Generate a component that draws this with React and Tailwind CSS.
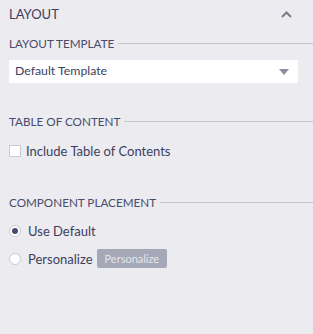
import React, { useState } from 'react';

const SectionTitle = ({ children }) => (
  <div className="flex items-center gap-[4px]">
    <span className="text-[11.7px] leading-[14px] text-[#4a4c6a] whitespace-nowrap">{children}</span>
    <div className="flex-1 h-px bg-[#c4c5cf]" />
  </div>
);

const Radio = ({ checked }) => (
  <span className="w-[12px] h-[12px] rounded-full bg-white border border-[#c9cad3] flex items-center justify-center">
    {checked && <span className="w-[6px] h-[6px] rounded-full bg-[#4a4c6a]" />}
  </span>
);

const App = () => {
  const [placement, setPlacement] = useState('default');
  const [toc, setToc] = useState(false);

  return (
    <div
      className="w-[313px] h-[334px] bg-[#ebebf0] text-[#3d3f5c] pl-[9px]"
      style={{ fontFamily: 'Lato, "Open Sans", sans-serif' }}
    >
      {/* Header */}
      <div className="flex items-center justify-between pr-[21px] pt-[7px] h-[22px]">
        <span className="text-[13px] leading-[15px] text-[#3d3f5c]">LAYOUT</span>
        <svg width="11" height="7" viewBox="0 0 11 7" fill="none">
          <path d="M1 6L5.5 1.5L10 6" stroke="#7a7b88" strokeWidth="2" />
        </svg>
      </div>

      {/* Layout template */}
      <div className="mt-[14px]">
        <SectionTitle>LAYOUT TEMPLATE</SectionTitle>
        <div className="mt-[10px] mr-[15px] h-[23px] bg-white flex items-center justify-between pl-[6px] pr-[9px]">
          <span className="text-[12.3px] text-[#3d3f5c]">Default Template</span>
          <svg width="10" height="6" viewBox="0 0 10 6">
            <path d="M0 0H10L5 6Z" fill="#8d8e99" />
          </svg>
        </div>
      </div>

      {/* Table of content */}
      <div className="mt-[31px]">
        <SectionTitle>TABLE OF CONTENT</SectionTitle>
        <label className="mt-[16px] flex items-center gap-[5px] cursor-pointer">
          <input type="checkbox" className="hidden" checked={toc} onChange={() => setToc(!toc)} />
          <span className="w-[12px] h-[12px] bg-white border border-[#c9cad3]" />
          <span className="text-[13px] leading-[14px]">Include Table of Contents</span>
        </label>
      </div>

      {/* Component placement */}
      <div className="mt-[37px]">
        <SectionTitle>COMPONENT PLACEMENT</SectionTitle>
        <div className="mt-[16px] flex items-center gap-[7px] h-[12px]" onClick={() => setPlacement('default')}>
          <Radio checked={placement === 'default'} />
          <span className="text-[13px] leading-[14px]">Use Default</span>
        </div>
        <div className="mt-[12px] flex items-center gap-[7px]" onClick={() => setPlacement('personalize')}>
          <Radio checked={placement === 'personalize'} />
          <span className="text-[13px] leading-[14px]">Personalize</span>
          <button className="ml-[-3px] h-[19px] px-[8px] rounded-[2px] bg-[#a6a8b8] text-[#e4e5ec] text-[11px] leading-[19px]">
            Personalize
          </button>
        </div>
      </div>
    </div>
  );
};

export default App;
